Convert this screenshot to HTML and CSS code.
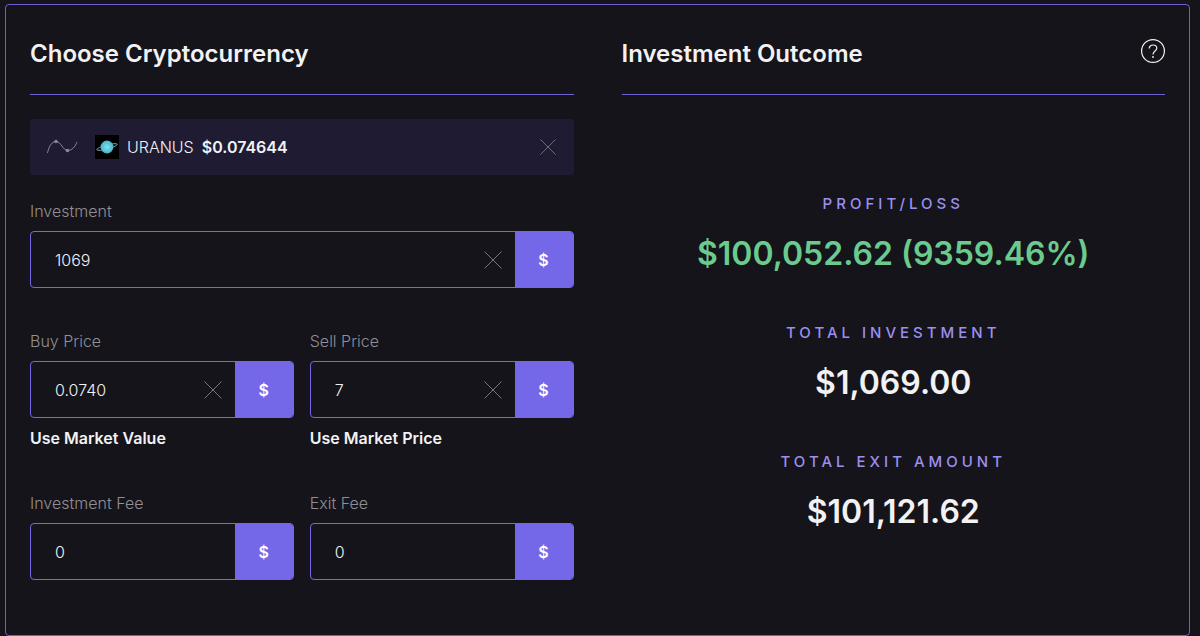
FILE: index.html
```
<!DOCTYPE html>
<html lang="en">
<head>
    <meta charset="UTF-8">
    <meta name="viewport" content="width=device-width, initial-scale=1.0">
    <title>Crypto Profit Calculator</title>
    <link rel="stylesheet" href="styles.css">
</head>
<body>
    <!-- Shared icons -->
    <svg class="sprite" aria-hidden="true">
        <symbol id="icon-close" viewBox="0 0 18 18">
            <path d="M0.5 0.5 L17.5 17.5 M17.5 0.5 L0.5 17.5" fill="none" stroke="currentColor" stroke-width="1"/>
        </symbol>
    </svg>

    <main class="calculator">
        <form class="column">
            <div class="column-header">
                <h2>Choose Cryptocurrency</h2>
            </div>

            <div class="coin">
                <svg class="coin-chart" viewBox="0 0 32 16" aria-hidden="true">
                    <path d="M1.5 14 C3 7 6 2.5 10 2.5 C15 2.5 17 11.5 21.5 11.5 C26 11.5 29 8 31 3" fill="none" stroke="currentColor" stroke-width="1"/>
                    <circle cx="10" cy="2.5" r="1.8" fill="currentColor"/>
                    <circle cx="21.5" cy="11.5" r="1.8" fill="currentColor"/>
                </svg>
                <svg class="coin-logo" viewBox="0 0 24 24" aria-hidden="true">
                    <defs>
                        <radialGradient id="planet">
                            <stop offset="0" stop-color="#7fe3ee"/>
                            <stop offset="1" stop-color="#46b4c8"/>
                        </radialGradient>
                    </defs>
                    <rect width="24" height="24" fill="#000"/>
                    <ellipse cx="12" cy="12" rx="10.6" ry="2" fill="none" stroke="#8fb4c0" stroke-width="0.8" transform="rotate(-15 12 12)"/>
                    <circle cx="12" cy="12" r="6.4" fill="url(#planet)"/>
                </svg>
                <span class="coin-name">URANUS</span>
                <strong class="coin-price">$0.074644</strong>
                <button type="button" class="clear coin-clear" aria-label="Remove coin">
                    <svg><use href="#icon-close"/></svg>
                </button>
            </div>

            <div class="fields">
                <div class="field field-wide">
                    <label for="investment">Investment</label>
                    <div class="input-group">
                        <input type="text" id="investment" value="1069">
                        <button type="button" class="clear" aria-label="Clear investment">
                            <svg><use href="#icon-close"/></svg>
                        </button>
                        <span class="unit">$</span>
                    </div>
                </div>
                <div class="field">
                    <label for="buyPrice">Buy Price</label>
                    <div class="input-group">
                        <input type="text" id="buyPrice" value="0.0740">
                        <button type="button" class="clear" aria-label="Clear buy price">
                            <svg><use href="#icon-close"/></svg>
                        </button>
                        <span class="unit">$</span>
                    </div>
                    <button type="button" class="market">Use Market Value</button>
                </div>
                <div class="field">
                    <label for="sellPrice">Sell Price</label>
                    <div class="input-group">
                        <input type="text" id="sellPrice" value="7">
                        <button type="button" class="clear" aria-label="Clear sell price">
                            <svg><use href="#icon-close"/></svg>
                        </button>
                        <span class="unit">$</span>
                    </div>
                    <button type="button" class="market">Use Market Price</button>
                </div>
                <div class="field">
                    <label for="investmentFee">Investment Fee</label>
                    <div class="input-group">
                        <input type="text" id="investmentFee" value="0">
                        <span class="unit">$</span>
                    </div>
                </div>
                <div class="field">
                    <label for="exitFee">Exit Fee</label>
                    <div class="input-group">
                        <input type="text" id="exitFee" value="0">
                        <span class="unit">$</span>
                    </div>
                </div>
            </div>
        </form>

        <section class="column">
            <div class="column-header">
                <h2>Investment Outcome</h2>
                <button type="button" class="help" aria-label="Help">
                    <svg viewBox="0 0 24 24">
                        <circle cx="12" cy="12" r="11.4" fill="none" stroke="currentColor" stroke-width="1.2"/>
                        <path d="M8.2 9.6 C8.2 7.4 9.8 6 12 6 C14.2 6 15.8 7.4 15.8 9.3 C15.8 12 12 12 12 15.4" fill="none" stroke="currentColor" stroke-width="1.2"/>
                        <circle cx="12" cy="18" r="0.9" fill="currentColor"/>
                    </svg>
                </button>
            </div>
            <dl class="results">
                <div class="result">
                    <dt>PROFIT/LOSS</dt>
                    <dd class="profit">$100,052.62 (9359.46%)</dd>
                </div>
                <div class="result">
                    <dt>TOTAL INVESTMENT</dt>
                    <dd>$1,069.00</dd>
                </div>
                <div class="result">
                    <dt>TOTAL EXIT AMOUNT</dt>
                    <dd>$101,121.62</dd>
                </div>
            </dl>
        </section>
    </main>
</body>
</html>
```
FILE: styles.css
```
* {
    box-sizing: border-box;
}
body {
    margin: 0;
    padding: 4px 10px 0 5px;
    min-height: 100vh;
    display: flex;
    background: #15141a;
    color: #f2f2f4;
    font-family: Inter, 'Liberation Sans', sans-serif;
    font-size: 16px;
    line-height: 24px;
}
h2, dl, dd {
    margin: 0;
}
button {
    padding: 0;
    border: none;
    background: none;
    color: inherit;
    font: inherit;
    cursor: pointer;
}
.sprite {
    position: absolute;
    width: 0;
    height: 0;
}
.calculator {
    flex: 1;
    display: grid;
    grid-template-columns: 1fr 1fr;
    gap: 48px;
    padding: 24px;
    border: 1px solid #6c61d3;
    border-radius: 4px;
}
.column {
    min-width: 0;
}
.column-header {
    display: flex;
    justify-content: space-between;
    align-items: flex-start;
    padding-bottom: 16px;
    margin-bottom: 24px;
    border-bottom: 1px solid #6c61d3;
}
h2 {
    font-size: 24px;
    font-weight: 600;
    line-height: 49px;
}
.help {
    height: 24px;
    margin-top: 10px;
}
.help svg {
    display: block;
    width: 24px;
    height: 24px;
}
.coin {
    display: flex;
    align-items: center;
    height: 56px;
    padding: 0 18px 0 16px;
    margin-bottom: 24px;
    border-radius: 4px;
    background: #1f1b33;
}
.coin-chart {
    width: 32px;
    height: 16px;
    margin-right: 17px;
    color: #8a8896;
}
.coin-logo {
    width: 24px;
    height: 24px;
    margin-right: 8px;
}
.coin-name {
    margin-right: 8px;
    font-weight: 300;
}
.coin-price {
    font-weight: 600;
}
.clear {
    color: #77767c;
}
.clear svg {
    display: block;
    width: 18px;
    height: 18px;
}
.coin-clear {
    margin-left: auto;
}
.coin-clear svg {
    width: 16px;
    height: 16px;
}
.fields {
    display: grid;
    grid-template-columns: 1fr 1fr;
    gap: 41px 16px;
}
.field {
    min-width: 0;
}
.field-wide {
    grid-column: 1 / -1;
}
.field label {
    display: block;
    margin-bottom: 8px;
    color: #918f96;
    font-weight: 300;
}
.input-group {
    display: flex;
    align-items: center;
    height: 57px;
    border: 1px solid #7468e4;
    border-radius: 4px;
    overflow: hidden;
}
.input-group input {
    flex: 1;
    min-width: 0;
    height: 100%;
    padding: 0 24px;
    border: none;
    outline: none;
    background: transparent;
    color: #f2f2f4;
    font: inherit;
    font-weight: 300;
}
.input-group .clear {
    margin-right: 13px;
}
.unit {
    display: flex;
    align-items: center;
    justify-content: center;
    flex: none;
    width: 58px;
    height: 100%;
    background: #7468e8;
    color: #fff;
    font-weight: 600;
}
.market {
    display: block;
    margin-top: 8px;
    font-weight: 600;
}
.results {
    display: flex;
    flex-direction: column;
    gap: 43px;
    padding-top: 73px;
    text-align: center;
}
.result dt {
    margin-bottom: 14px;
    color: #9b8ff0;
    font-size: 15px;
    font-weight: 500;
    letter-spacing: 4px;
}
.result dd {
    font-size: 32px;
    font-weight: 600;
    line-height: 48px;
}
.result .profit {
    color: #6bcb8f;
}
```
